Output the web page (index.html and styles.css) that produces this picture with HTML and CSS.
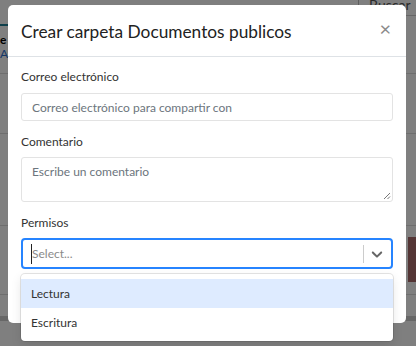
FILE: index.html
```html
<!DOCTYPE html>
<html lang="es">
<head>
<meta charset="utf-8">
<title>Crear carpeta</title>
<link rel="stylesheet" href="styles.css">
</head>
<body>
<div class="page">
  <div class="page-top">
    <div class="page-left">
      <div class="teal-line"></div>
      <div class="bold-text">e r</div>
      <div class="blue-text">AD</div>
    </div>
    <div class="search-box">Buscar</div>
  </div>
  <div class="page-line l1"></div>
  <div class="page-line l2"></div>
  <div class="page-line l3"></div>
  <div class="red-block"></div>
  <div class="page-line l4"></div>
  <div class="page-bottom"></div>
</div>
<div class="backdrop"></div>
<div class="modal">
  <div class="modal-header">
    <h5 class="modal-title">Crear carpeta Documentos publicos</h5>
    <span class="close">&times;</span>
  </div>
  <div class="modal-body">
    <label class="field-label">Correo electrónico</label>
    <div class="input">Correo electrónico para compartir con</div>
    <label class="field-label gap">Comentario</label>
    <div class="textarea">Escribe un comentario
      <svg class="grip" width="8" height="8" viewBox="0 0 8 8"><path d="M7 1 L1 7 M7 4.5 L4.5 7" stroke="#777" stroke-width="1"/></svg>
    </div>
    <label class="field-label gap">Permisos</label>
    <div class="select">
      <div class="select-value"><span class="caret"></span><span class="select-ph">Select...</span></div>
      <span class="separator"></span>
      <svg class="chevron" width="18" height="18" viewBox="0 0 20 20"><path fill="#666" d="M4.516 7.548c0.436-0.446 1.043-0.481 1.576 0l3.908 3.747 3.908-3.747c0.533-0.481 1.141-0.446 1.574 0 0.436 0.445 0.408 1.197 0 1.615-0.406 0.418-4.695 4.502-4.695 4.502-0.217 0.223-0.502 0.335-0.787 0.335s-0.57-0.112-0.789-0.335c0 0-4.287-4.084-4.695-4.502s-0.436-1.17 0-1.615z"/></svg>
    </div>
  </div>
</div>
<div class="menu">
  <div class="option active">Lectura</div>
  <div class="option">Escritura</div>
</div>
</body>
</html>
```
FILE: styles.css
```css
* { box-sizing: border-box; }
html, body { margin: 0; padding: 0; }
body {
  width: 416px;
  height: 346px;
  overflow: hidden;
  position: relative;
  font-family: Lato, "Noto Sans", sans-serif;
  background: #ffffff;
}
.page { width: 416px; height: 346px; }
.page-top { display: flex; justify-content: space-between; height: 70px; }
.page-left { padding-top: 24px; width: 40px; }
.teal-line { height: 2px; background: #1d7f97; width: 30px; }
.bold-text { font-size: 12px; font-weight: 700; color: #000; margin-top: 7px; line-height: 14px; }
.blue-text { font-size: 12px; color: #2a6fd0; line-height: 14px; }
.search-box {
  width: 58px; height: 28px; margin-top: -12px;
  border-left: 1px solid #bbb; border-bottom: 1px solid #ccc;
  font-size: 14px; color: #555; padding: 8px 0 0 10px;
}
.page-line { height: 1px; background: #ddd; }
.l1 { margin-top: 3px; }
.l2 { margin-top: 59px; }
.l3 { margin-top: 91px; }
.red-block { margin: 11px 0 0 408px; width: 8px; height: 45px; background: #a86a6a; }
.l4 { margin-top: 12px; }
.page-bottom { margin-top: 21px; height: 5px; background: #cfcfcf; }

.backdrop {
  position: absolute; inset: 0;
  background: rgba(0,0,0,0.5);
}
.modal {
  position: absolute;
  left: 8px; top: 5px;
  width: 398px; height: 318px;
  background: #fff;
  border-radius: 5px;
}
.modal-header {
  height: 52px;
  border-bottom: 1px solid #dee2e6;
  display: flex;
  align-items: center;
  justify-content: space-between;
  padding: 0 15px 0 13px;
}
.modal-title {
  margin: 0;
  font-size: 17.3px;
  font-weight: 400;
  color: #222;
  padding-top: 2px;
}
.close { font-size: 20px; color: #8a8a8a; margin-top: -5px; }
.modal-body { padding: 12px 13px 0 13px; display: flex; flex-direction: column; }
.field-label { font-size: 12px; line-height: 16px; color: #333; margin-bottom: 8px; }
.field-label.gap { margin-top: 13px; margin-bottom: 7px; }
.input {
  height: 28px;
  border: 1px solid #e3e3e3;
  border-radius: 3px;
  font-size: 12px;
  color: #6c757d;
  padding: 0 10px;
  display: flex; align-items: center;
}
.textarea {
  position: relative;
  height: 45px;
  border: 1px solid #e3e3e3;
  border-radius: 3px;
  font-size: 12px;
  color: #6c757d;
  padding: 6px 10px;
}
.grip { position: absolute; right: 1px; bottom: 1px; }
.select {
  height: 31px;
  border: 2px solid #2684ff;
  border-radius: 4px;
  display: flex; align-items: center;
  padding: 0 0 0 8px;
}
.select-value { flex: 1; display: flex; align-items: center; }
.caret { width: 1px; height: 20px; background: #222; }
.select-ph { font-size: 12px; color: #8a8a8a; }
.separator { width: 1px; height: 18px; background: #ccc; }
.chevron { margin: 0 5px 0 4px; }
.menu {
  position: absolute;
  left: 21px; top: 274px;
  width: 372px;
  background: #fff;
  border-radius: 4px;
  box-shadow: 0 0 0 1px rgba(0,0,0,0.1), 0 4px 11px rgba(0,0,0,0.1);
  padding: 5px 0 4px;
}
.option {
  height: 29px;
  display: flex; align-items: center;
  padding: 0 10px;
  font-size: 12px;
  color: #333;
}
.option.active { background: #deebff; }
```
